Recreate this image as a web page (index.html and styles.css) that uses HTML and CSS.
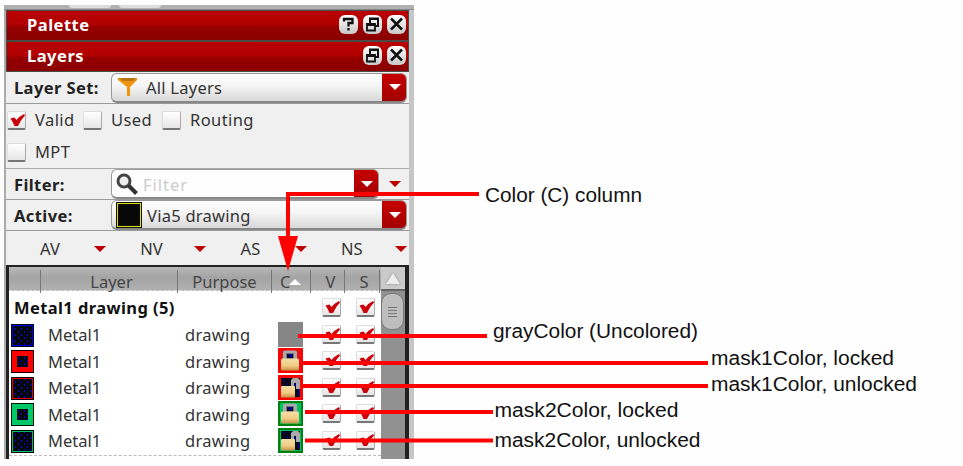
FILE: index.html
```html
<!DOCTYPE html>
<html lang="en">
<head>
<meta charset="utf-8">
<title>Layers palette</title>
<link rel="stylesheet" href="styles.css">
</head>
<body>
<svg class="defs" width="0" height="0">
  <defs>
    <pattern id="dots" width="6" height="6" patternUnits="userSpaceOnUse"><rect width="6" height="6" fill="#080808"/><path d="M1 1h1v2h-1zM4 4h1v2h-1z" fill="#00f"/></pattern>
    <linearGradient id="brass" x2="0" y2="1"><stop stop-color="#f5dda6"/><stop offset=".6" stop-color="#f0cb84"/><stop offset="1" stop-color="#c98f45"/></linearGradient>
    <linearGradient id="btn" x2="0" y2="1"><stop stop-color="#fff"/><stop offset="1" stop-color="#c8c8c8"/></linearGradient>
  </defs>
  <symbol id="check" viewBox="0 0 19 19"><path d="M3.500 7.500 7.500 6.500 9.500 9Q12 5.500 17 3L18 4.500Q13.500 9 11 15H7.500Q6 11 3.500 7.500Z" fill="#cc0008"/></symbol>
  <symbol id="help" viewBox="0 0 19 19"><rect width="19" height="19" rx="6" fill="url(#btn)"/><path d="M5 6.500V4H13.500V8H9.500V11.500M9.500 13V15.500" fill="none" stroke="#111" stroke-width="2.300"/></symbol>
  <symbol id="float" viewBox="0 0 19 19"><rect width="19" height="19" rx="6" fill="url(#btn)"/><path d="M7 8V3.500H15V11H12M7 4H15" fill="none" stroke="#111" stroke-width="2"/><path d="M4 9H12V15.500H4ZM4 10H12" fill="#ddd" stroke="#111" stroke-width="1.800"/></symbol>
  <symbol id="close" viewBox="0 0 19 19"><rect width="19" height="19" rx="6" fill="url(#btn)"/><path d="M4 3.500 15 14.500M15 3.500 4 14.500" stroke="#111" stroke-width="2.500"/></symbol>
  <symbol id="locked" viewBox="0 0 25 25"><path d="M5 12V3.500L7 2.500H17L19 3.500V12" fill="#aaa"/><path d="M8.500 10.500V5.500H15.500V10.500" fill="#080818" stroke="#777"/><path d="M11 6h3v3h-3z" fill="#00a"/><rect x="3" y="10.500" width="18" height="12" rx="1.500" fill="url(#brass)"/></symbol>
  <symbol id="unlocked" viewBox="0 0 25 25"><path d="M3 3H22V22H17V12H3Z" fill="#080818"/><path d="M13 11V5L15 3H20L22 5V14H18V8H16V11Z" fill="#aaa"/><path d="M16 9h1v2h-1M20 15h1v5h-1M5 5h2M8 9h2" fill="none" stroke="#00b"/><rect x="3" y="11" width="14" height="11.500" rx="1" fill="url(#brass)"/></symbol>
</svg>

<main class="panel">
  <div class="strip"><i></i><i></i></div>
  <div class="body">
    <div class="titles">
      <header class="title"><b>Palette</b><svg><use href="#help"/></svg><svg><use href="#float"/></svg><svg><use href="#close"/></svg></header>
      <header class="title"><b>Layers</b><svg><use href="#float"/></svg><svg><use href="#close"/></svg></header>
    </div>
    <div class="field set">
      <label>Layer Set:</label>
      <div class="combo">
        <svg class="funnel" viewBox="0 0 20 20"><path d="M0 1H19V3L12 10V19H9V10L0 3Z" fill="#ee950c"/><path d="M1 1H18L15 4H5Z" fill="#b87412"/></svg>
        <span class="value">All Layers</span><span class="drop"></span>
      </div>
    </div>
    <div class="options">
      <div class="line"><span class="box"><svg><use href="#check"/></svg></span><span class="o1">Valid</span><span class="box"></span><span class="o2">Used</span><span class="box"></span><span class="o3">Routing</span></div>
      <div class="line"><span class="box"></span><span class="o4">MPT</span></div>
    </div>
    <div class="field filter">
      <label>Filter:</label>
      <div class="combo">
        <svg class="lens" viewBox="0 0 22 22"><circle cx="8" cy="8" r="6" fill="#eee" stroke="#444" stroke-width="3"/><path d="m12.500 12.500 8 8" stroke="#333" stroke-width="4"/></svg>
        <span class="value hint">Filter</span><span class="drop"></span>
      </div>
      <span class="arrow"></span>
    </div>
    <div class="field active">
      <label>Active:</label>
      <div class="combo">
        <span class="chip"></span>
        <span class="value">Via5 drawing</span><span class="drop"></span>
      </div>
    </div>
    <div class="modes">
      <div><span>AV</span><i class="arrow"></i></div><div><span>NV</span><i class="arrow"></i></div><div><span>AS</span><i class="arrow"></i></div><div><span>NS</span><i class="arrow"></i></div>
    </div>
    <div class="table">
      <div class="grid">
        <div class="head"><span></span><span class="wide">Layer</span><span>Purpose</span><span class="sort">C<i></i></span><span class="v">V</span><span class="s">S</span></div>
        <div class="row group"><b>Metal1 drawing (5)</b><span class="box"><svg><use href="#check"/></svg></span><span class="box"><svg><use href="#check"/></svg></span></div>
        <div class="row"><svg class="sw"><rect width="23" height="23" fill="#080818"/><rect x="1.500" y="1.500" width="20" height="20" fill="url(#dots)" stroke="#0000d8"/></svg><span>Metal1</span><span class="purpose">drawing</span><span class="mask gray"></span><span class="box"><svg><use href="#check"/></svg></span><span class="box"><svg><use href="#check"/></svg></span></div>
        <div class="row"><svg class="sw"><rect width="23" height="23" fill="#180000"/><rect x="1" y="1" width="21" height="21" fill="#f00"/><rect x="6" y="6" width="11" height="11" fill="url(#dots)"/></svg><span>Metal1</span><span class="purpose">drawing</span><span class="mask red"><svg><use href="#locked"/></svg></span><span class="box"><svg><use href="#check"/></svg></span><span class="box"><svg><use href="#check"/></svg></span></div>
        <div class="row"><svg class="sw"><rect width="23" height="23" fill="#080808"/><rect x="1.500" y="1.500" width="20" height="20" fill="url(#dots)" stroke="#e00000"/></svg><span>Metal1</span><span class="purpose">drawing</span><span class="mask red"><svg><use href="#unlocked"/></svg></span><span class="box"><svg><use href="#check"/></svg></span><span class="box"><svg><use href="#check"/></svg></span></div>
        <div class="row"><svg class="sw"><rect width="23" height="23" fill="#001808"/><rect x="1" y="1" width="21" height="21" fill="#00c867"/><rect x="6" y="6" width="11" height="11" fill="url(#dots)"/></svg><span>Metal1</span><span class="purpose">drawing</span><span class="mask green"><svg><use href="#locked"/></svg></span><span class="box"><svg><use href="#check"/></svg></span><span class="box"><svg><use href="#check"/></svg></span></div>
        <div class="row"><svg class="sw"><rect width="23" height="23" fill="#080808"/><rect x="1.500" y="1.500" width="20" height="20" fill="url(#dots)" stroke="#00c060"/></svg><span>Metal1</span><span class="purpose">drawing</span><span class="mask green"><svg><use href="#unlocked"/></svg></span><span class="box"><svg><use href="#check"/></svg></span><span class="box"><svg><use href="#check"/></svg></span></div>
        <div class="next"><i></i><i></i></div>
      </div>
      <div class="scroll"><div class="up"></div><div class="thumb"><i></i><i></i><i></i><i></i></div></div>
    </div>
  </div>
</main>

<svg class="callouts" viewBox="0 0 963 466">
  <g fill="none" stroke="#f00" stroke-width="4">
    <path d="M479 194H288V240"/>
    <path d="M298 336H487M302 363H708M302 386H708M305 412H493M305 440.500H493"/>
  </g>
  <path d="M278 236H298L288 271Z" fill="#f00"/>
  <g class="notes">
    <text x="485" y="202" textLength="157" lengthAdjust="spacingAndGlyphs">Color (C) column</text>
    <text x="493" y="338" textLength="205" lengthAdjust="spacingAndGlyphs">grayColor (Uncolored)</text>
    <text x="711" y="365" textLength="183" lengthAdjust="spacingAndGlyphs">mask1Color, locked</text>
    <text x="711" y="391" textLength="206" lengthAdjust="spacingAndGlyphs">mask1Color, unlocked</text>
    <text x="494.500" y="416.500" textLength="184" lengthAdjust="spacingAndGlyphs">mask2Color, locked</text>
    <text x="494.500" y="446.500" textLength="206" lengthAdjust="spacingAndGlyphs">mask2Color, unlocked</text>
  </g>
</svg>
</body>
</html>
```
FILE: styles.css
```css
* { box-sizing: border-box; }
body { margin: 0; width: 963px; height: 466px; overflow: hidden; background: #fefefe; position: relative; font: 16.5px/20px "Noto Sans", sans-serif; color: #333; }
svg { display: block; flex: none; }
.defs { position: absolute; }
.panel { margin-left: 4px; width: 410px; height: 459px; padding-top: 5px; }
.strip { height: 5px; background: #b0b0b0; border-bottom: 1px solid #888; display: flex; gap: 8px; padding-left: 65px; }
.strip i { width: 42px; height: 3px; background: #ddd; border-radius: 0 0 8px 8px; }
.body { height: 449px; border-left: 2px solid #aaa; border-right: 5px solid #c6c6c6; background: #f0f0f0; display: flex; flex-direction: column; }
.titles { height: 62px; background: #4a4a4a; padding: 1px 1px 1px 1px; display: flex; flex-direction: column; gap: 2px; }
.title { height: 29px; display: flex; align-items: center; gap: 5px; padding: 0 2px 2px 20px; background: linear-gradient(#bb0000, #b00000 48%, #960000 54%, #8a0000); color: #fff; }
.title b { flex: 1; letter-spacing: .5px; }
.title svg { width: 19px; height: 19px; }
.field { height: 32px; border-bottom: 1px solid #999; display: flex; align-items: center; }
.field label { width: 105px; padding: 1px 0 0 8px; font-weight: 700; letter-spacing: .4px; color: #222; }
.combo { width: 296px; height: 30px; border: 1px solid #999; border-bottom: 2px solid #888; border-radius: 6px; background: linear-gradient(#fff, #f4f4f4 45%, #d8d8d8); display: flex; align-items: center; overflow: hidden; }
.value { flex: 1; white-space: nowrap; padding-top: 2px; letter-spacing: .25px; }
.funnel { width: 20px; height: 20px; margin: 0 8px 0 6px; }
.drop { width: 25px; height: 30px; margin-right: -1px; background: linear-gradient(#c80000, #a00000); display: grid; place-items: center; }
.drop::after { content: ""; border: solid transparent; border-width: 6px 6px 0; border-top-color: #fff; }
.options { height: 65px; border-bottom: 1px solid #aaa; }
.line { height: 32px; display: flex; align-items: center; padding-left: 1px; }
.box { width: 19px; height: 19px; flex: none; border: 1px solid #ddd; border-bottom: 2px solid #777; border-right-color: #aaa; border-radius: 2px; background: linear-gradient(#fff, #e6e6e6); }
.box svg { width: 19px; height: 19px; margin: -1px; }
.o1, .o2, .o3, .o4 { margin-left: 9px; letter-spacing: .4px; }
.o1 { width: 48px; }
.o2 { width: 51px; }
.filter { height: 31px; }
.filter .combo { width: 268px; background: #fefefe; }
.filter .arrow { margin-left: 10px; }
.lens { width: 22px; height: 22px; margin: 0 5px 0 4px; }
.value.hint { color: #ccc; letter-spacing: 1px; }
.arrow { width: 0; height: 0; border: solid transparent; border-width: 6px 6px 0; border-top-color: #bc0000; }
.active { height: 31px; }
.chip { width: 26px; height: 26px; flex: none; margin: 0 5px 0 4px; background: #080808; border: 2px solid #dede00; outline: 1px solid #111; outline-offset: -1px; box-shadow: inset 0 0 0 1px #111; }
.modes { height: 34px; display: flex; }
.modes div { width: 100.300px; display: flex; align-items: center; padding: 2px 0 0 34px; }
.modes span { width: 54px; }
.table { flex: 1; border: solid #222; border-width: 2px 4px 0 3px; display: flex; overflow: hidden; background: #fff; }
.grid { width: 372px; flex: none; }
.head { height: 24px; background: linear-gradient(#b8b8b8, #a4a4a4 45%, #b0b0b0); border-bottom: 1px dashed #ddd; display: grid; grid-template-columns: 32px 137px 94px 39px 34px 35px; text-align: center; color: #444; }
.head span { border-right: 1px solid #777; margin-top: 3px; line-height: 23px; }
.head .wide { padding-left: 5px; }
.head .v { padding-left: 6px; }
.head .s { padding-left: 4px; }
.head .sort { position: relative; text-align: left; padding-left: 8px; }
.sort i { position: absolute; left: 17px; top: 9px; border: solid transparent; border-width: 0 6px 6px; border-bottom-color: #fff; }
.row { height: 26.500px; display: grid; grid-template-columns: 37px 137px 93px 44px 34px 25px; align-items: center; padding-left: 2px; }
.row .box { position: relative; top: -1px; }
.group { height: 31px; padding-top: 3px; grid-template-columns: 311px 34px 25px; }
.group b { padding-left: 3px; color: #111; letter-spacing: .4px; }
.sw { width: 23px; height: 23px; }
.purpose { letter-spacing: .3px; }
.mask { width: 25px; height: 25px; border: 2px solid; position: relative; top: -1px; }
.mask svg { width: 25px; height: 25px; margin: -2px; }
.gray { background: #868686; border-color: #868686; }
.red { background: #e81010; border-color: #f00; }
.green { background: #00c060; border-color: #008010; }
.next { border-top: 1px dashed #bbb; height: 5px; padding: 3px 0 0 313px; display: flex; gap: 16px; }
.next i { width: 18px; border-top: 1px solid #bbb; }
.scroll { flex: 1; background: #919191; }
.up { height: 24px; background: #cacaca; border-bottom: 2px solid #666; display: grid; place-items: center; }
.up::after { content: ""; border: solid transparent; border-width: 0 7px 11px; border-bottom-color: #eee; filter: drop-shadow(0 0 1px #888); }
.thumb { width: 23px; height: 37px; margin-top: 2px; border: 1px solid #777; border-radius: 10px; background: #bebebe; display: flex; flex-direction: column; align-items: center; justify-content: center; gap: 2px; }
.thumb i { width: 9px; height: 1px; background: #777; }
.callouts { position: absolute; left: 0; top: 0; width: 963px; height: 466px; }
.notes { font: 20px "Liberation Sans", sans-serif; fill: #111; }
```
